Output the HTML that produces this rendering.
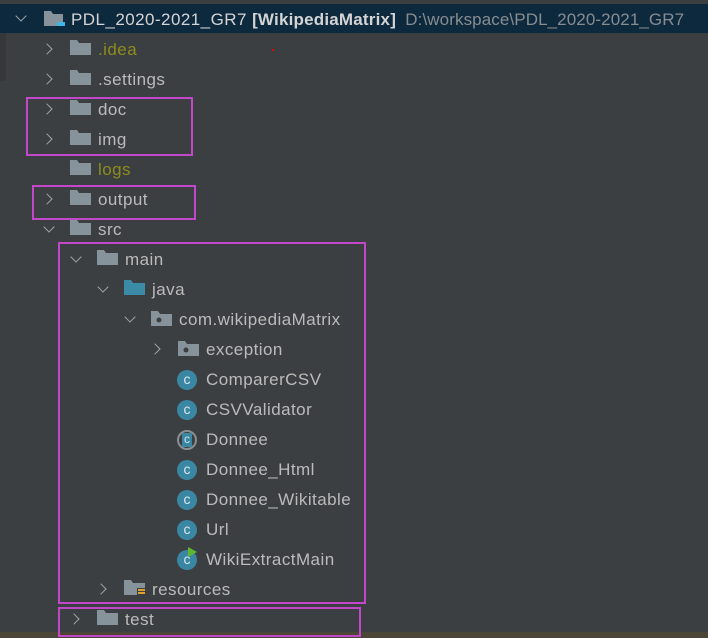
<!DOCTYPE html>
<html><head><meta charset="utf-8"><style>
body{margin:0;width:708px;height:638px;background:#3c3f41;position:relative;overflow:hidden;font-family:"Liberation Sans",sans-serif;font-size:17px;letter-spacing:0.45px;color:#bbbbbb}
.r{position:absolute;height:30px;line-height:30px;white-space:nowrap}
.sel{position:absolute;left:0;top:4px;width:708px;height:29px;background:#0d293e}
.chev{position:absolute;width:7px;height:7px;border-right:1.6px solid #a0a3a6;border-bottom:1.6px solid #a0a3a6}
.cr{transform:rotate(-45deg)}
.cd{transform:rotate(45deg)}
.fold{position:absolute;width:21px;height:15px}
.ci{position:absolute;width:20px;height:20px;border-radius:50%;background:#3a87a3;color:#d8e6ec;font-size:14px;line-height:19px;text-align:center;letter-spacing:0}
.box{position:absolute;border:2px solid #c347c9;box-sizing:border-box}
</style></head><body>
<div style="position:absolute;left:0;top:33px;width:6px;height:48px;background:#353739"></div>
<div class="sel"></div>
<div style="position:absolute;left:0;top:632px;width:708px;height:6px;background:#4a4536"></div>

<div class="chev cd" style="left:17px;top:12px"></div>
<svg class="fold" style="left:44px;top:11px" width="22" height="20"><path d="M0 0h7l2 3h10v13H0z" fill="#87939a"/><rect x="13" y="11" width="9" height="9" fill="#3fb5e6"/></svg>
<div class="r" style="left:71px;top:5px;color:#d4d4d4">PDL_2020-2021_GR7 <b style="color:#d4d4d4;letter-spacing:0.2px">[WikipediaMatrix]</b> <span style="color:#878c90;margin-left:4px;letter-spacing:0.1px">D:\workspace\PDL_2020-2021_GR7</span></div>

<script>
const rows=[
[1,'r','f','.idea','#8c8c1c'],
[1,'r','f','.settings'],
[1,'r','f','doc'],
[1,'r','f','img'],
[1,'',  'f','logs','#8c8c1c'],
[1,'r','f','output'],
[1,'d','f','src'],
[2,'d','f','main'],
[3,'d','j','java'],
[4,'d','p','com.wikipediaMatrix'],
[5,'r','p','exception'],
[5,'', 'c','ComparerCSV'],
[5,'', 'c','CSVValidator'],
[5,'', 'a','Donnee'],
[5,'', 'c','Donnee_Html'],
[5,'', 'c','Donnee_Wikitable'],
[5,'', 'c','Url'],
[5,'', 'm','WikiExtractMain'],
[3,'r','res','resources'],
[2,'r','f','test']];
let h='';
rows.forEach((r,i)=>{
 const c=50+30*(i);const L=r[0];const base=(L-1)*27;
 if(r[1]=='r')h+=`<div class="chev cr" style="left:${43+base}px;top:${c-5}px"></div>`;
 if(r[1]=='d')h+=`<div class="chev cd" style="left:${45+base}px;top:${c-7}px"></div>`;
 const ix=70+base;
 if(r[2]=='f')h+=`<svg class="fold" style="left:${ix}px;top:${c-10}px" width="21" height="16"><path d="M0 0h7l2 3h12v13H0z" fill="#87939a"/></svg>`;
 if(r[2]=='j')h+=`<svg class="fold" style="left:${ix}px;top:${c-10}px" width="21" height="16"><path d="M0 0h7l2 3h12v13H0z" fill="#3b8aa6"/></svg>`;
 if(r[2]=='p')h+=`<svg class="fold" style="left:${ix}px;top:${c-9}px" width="21" height="16"><path d="M0 0h7l2 3h12v13H0z" fill="#87939a"/><circle cx="8" cy="9" r="2.5" fill="#3c3f41"/></svg>`;
 if(r[2]=='res')h+=`<svg class="fold" style="left:${ix}px;top:${c-10}px" width="22" height="20"><path d="M0 0h7l2 3h12v13H0z" fill="#87939a"/><rect x="13" y="8" width="9" height="12" fill="#3c3f41"/><g fill="#e0a030"><rect x="14" y="9" width="8" height="2"/><rect x="14" y="12" width="8" height="2"/><rect x="14" y="15" width="8" height="2"/><rect x="14" y="18" width="8" height="2"/></g></svg>`;
 if(r[2]=='c'||r[2]=='m')h+=`<div class="ci" style="left:${ix-1}px;top:${c-10}px">c</div>`;
 if(r[2]=='m')h+=`<svg style="position:absolute;left:${ix+10}px;top:${c-13}px" width="10" height="11"><path d="M0 0L9 5L0 10z" fill="#5fb832"/></svg>`;
 if(r[2]=='a')h+=`<div class="ci" style="left:${ix-1}px;top:${c-10}px;background:none;border:2px solid #8a8f93;box-sizing:border-box"><div style="position:absolute;left:3px;top:1px;width:10px;height:14px;background:#3a87a3;line-height:13px;font-size:12px">c</div></div>`;
 h+=`<div class="r" style="left:${98+base}px;top:${c-15}px;${r[4]?'color:'+r[4]:''}">${r[3]}</div>`;
});
document.write(h);
</script>
<div style="position:absolute;left:272px;top:49px;width:2px;height:2px;background:#e00"></div>

<div class="box" style="left:26px;top:97px;width:167px;height:59px"></div>
<div class="box" style="left:32px;top:185px;width:164px;height:35px"></div>
<div class="box" style="left:58px;top:242px;width:308px;height:362px"></div>
<div class="box" style="left:58px;top:607px;width:303px;height:30px"></div>
</body></html>
